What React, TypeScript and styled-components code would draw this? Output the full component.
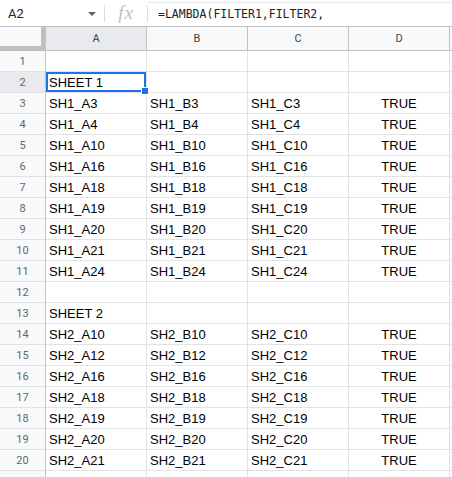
import React from "react";
import styled, { createGlobalStyle } from "styled-components";

const GlobalStyle = createGlobalStyle`
  html, body {
    margin: 0;
    padding: 0;
    overflow: hidden;
    background: #fff;
  }
`;

const Page = styled.div`
  width: 452px;
  font-family: "Liberation Sans", Arial, sans-serif;
`;

const FormulaBar = styled.div`
  display: flex;
  align-items: center;
  height: 26px;
`;

const NameBox = styled.div`
  width: 104px;
  height: 100%;
  box-sizing: border-box;
  display: flex;
  align-items: center;
  justify-content: space-between;
  padding: 0 8px 0 8px;
  font-family: Roboto, "Liberation Sans", sans-serif;
  font-size: 13px;
  color: #202124;
`;

const Caret = styled.span`
  width: 0;
  height: 0;
  border-left: 4px solid transparent;
  border-right: 4px solid transparent;
  border-top: 4px solid #5f6368;
  margin-top: 2px;
`;

const Divider = styled.div`
  width: 1px;
  height: 17px;
  background: #dadce0;
  flex: none;
`;

const FxBox = styled.div`
  width: 42px;
  display: flex;
  justify-content: center;
  align-items: center;
  font-family: "Liberation Serif", "DejaVu Serif", serif;
  font-style: italic;
  font-size: 19px;
  color: #bdc1c6;
  letter-spacing: 1px;
`;

const FormulaInput = styled.div`
  flex: 1;
  align-self: stretch;
  box-sizing: border-box;
  display: flex;
  align-items: center;
  margin-top: 2px;
  padding: 0 0 2px 10px;
  border-top: 1px solid #e8eaed;
  font-family: "DejaVu Sans Mono", "Liberation Mono", monospace;
  font-size: 11.5px;
  color: #202124;
  white-space: nowrap;
`;

const Grid = styled.div`
  display: grid;
  grid-template-columns: 46px repeat(4, 101px) 1fr;
  grid-template-rows: 24px;
  grid-auto-rows: 21px;
  border-top: 1px solid #c0c0c0;
`;

const Corner = styled.div`
  box-sizing: border-box;
  background: #f8f9fa;
  border-right: 5px solid #c0c0c0;
  border-bottom: 5px solid #c0c0c0;
`;

const ColHeader = styled.div<{ $active?: boolean }>`
  box-sizing: border-box;
  display: flex;
  align-items: center;
  justify-content: center;
  background: ${({ $active }) => ($active ? "#e8eaed" : "#f8f9fa")};
  border-right: 1px solid #c0c0c0;
  border-bottom: 1px solid #c0c0c0;
  font-family: Roboto, "Liberation Sans", sans-serif;
  font-size: 11px;
  color: #444;
`;

const RowHeader = styled.div<{ $active?: boolean }>`
  box-sizing: border-box;
  display: flex;
  align-items: center;
  justify-content: center;
  background: ${({ $active }) => ($active ? "#e8eaed" : "#f8f9fa")};
  border-right: 1px solid #c0c0c0;
  border-bottom: 1px solid #dfe1e5;
  font-family: Roboto, "Liberation Sans", sans-serif;
  font-size: 11px;
  color: #666;
`;

const Cell = styled.div<{ $align?: "left" | "center"; $selected?: boolean }>`
  position: ${({ $selected }) => ($selected ? "relative" : "static")};
  box-sizing: border-box;
  display: flex;
  align-items: flex-end;
  justify-content: ${({ $align }) => ($align === "center" ? "center" : "flex-start")};
  padding: 0 3px 2px 3px;
  border-right: 1px solid #e2e3e3;
  border-bottom: 1px solid #e2e3e3;
  font-size: 13px;
  color: #000;
  white-space: nowrap;
`;

const Selection = styled.div`
  position: absolute;
  inset: 0;
  border: 2px solid #1a73e8;
  pointer-events: none;
  z-index: 2;
`;

const Handle = styled.div`
  position: absolute;
  right: -4px;
  bottom: -4px;
  width: 6px;
  height: 6px;
  background: #1a73e8;
  box-shadow: 0 0 0 1px #fff;
  z-index: 3;
`;

type Row = string[] | null;

const sh1 = ["3", "4", "10", "16", "18", "19", "20", "21", "24"];
const sh2 = ["10", "12", "16", "18", "19", "20", "21"];

const makeRow = (sheet: string, n: string): string[] => [
  `${sheet}_A${n}`,
  `${sheet}_B${n}`,
  `${sheet}_C${n}`,
  "TRUE",
];

const rows: Row[] = [
  null,
  ["SHEET 1", "", "", ""],
  ...sh1.map((n) => makeRow("SH1", n)),
  null,
  ["SHEET 2", "", "", ""],
  ...sh2.map((n) => makeRow("SH2", n)),
  null,
];

const columns = ["A", "B", "C", "D", ""];

export default function App() {
  return (
    <Page>
      <GlobalStyle />
      <FormulaBar>
        <NameBox>
          A2
          <Caret />
        </NameBox>
        <Divider />
        <FxBox>fx</FxBox>
        <Divider />
        <FormulaInput>=LAMBDA(FILTER1,FILTER2,</FormulaInput>
      </FormulaBar>
      <Grid>
        <Corner />
        {columns.map((c) => (
          <ColHeader key={c || "E"} $active={c === "A"}>
            {c}
          </ColHeader>
        ))}
        {rows.map((row, i) => {
          const num = i + 1;
          const values = row ?? ["", "", "", ""];
          return (
            <React.Fragment key={num}>
              <RowHeader $active={num === 2}>{num}</RowHeader>
              {values.map((v, j) => {
                const selected = num === 2 && j === 0;
                return (
                  <Cell
                    key={j}
                    $align={v === "TRUE" ? "center" : "left"}
                    $selected={selected}
                  >
                    {v}
                    {selected && (
                      <Selection>
                        <Handle />
                      </Selection>
                    )}
                  </Cell>
                );
              })}
              <Cell />
            </React.Fragment>
          );
        })}
      </Grid>
    </Page>
  );
}
